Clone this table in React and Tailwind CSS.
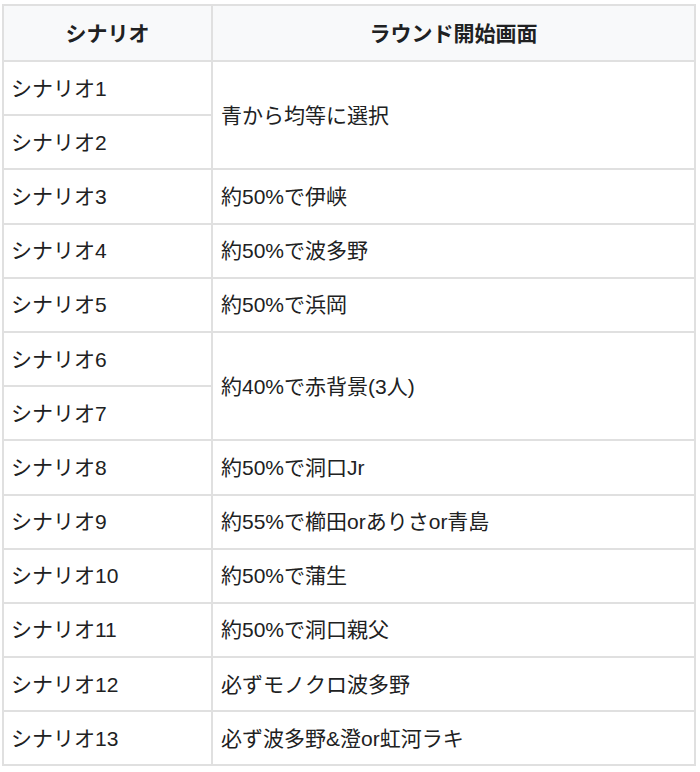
import React from "react";

const rows = [
  ["シナリオ1", "青から均等に選択", 2],
  ["シナリオ2", null],
  ["シナリオ3", "約50%で伊峡", 1],
  ["シナリオ4", "約50%で波多野", 1],
  ["シナリオ5", "約50%で浜岡", 1],
  ["シナリオ6", "約40%で赤背景(3人)", 2],
  ["シナリオ7", null],
  ["シナリオ8", "約50%で洞口Jr", 1],
  ["シナリオ9", "約55%で櫛田orありさor青島", 1],
  ["シナリオ10", "約50%で蒲生", 1],
  ["シナリオ11", "約50%で洞口親父", 1],
  ["シナリオ12", "必ずモノクロ波多野", 1],
  ["シナリオ13", "必ず波多野&澄or虹河ラキ", 1],
];

export default function App() {
  return (
    <div
      className="bg-white w-[700px] h-[772px] pt-[4px] pl-[2px] text-[#202122]"
      style={{ fontFamily: '"Liberation Sans", "Noto Sans CJK JP", sans-serif' }}
    >
      <table className="w-[694px] border-collapse border-2 border-[#e0e0e0] text-[21px] leading-none">
        <thead>
          <tr className="h-[56px] bg-[#f8f9fa]">
            <th className="w-[209px] border-2 border-[#e0e0e0] font-bold text-center align-middle">
              シナリオ
            </th>
            <th className="border-2 border-[#e0e0e0] font-bold text-center align-middle">
              ラウンド開始画面
            </th>
          </tr>
        </thead>
        <tbody>
          {rows.map(([a, b, span]) => (
            <tr key={a} className="h-[54.2px]">
              <td className="border-2 border-[#e0e0e0] pl-[7px] pr-[8px] align-middle">{a}</td>
              {b !== null && (
                <td
                  rowSpan={span}
                  className="border-2 border-[#e0e0e0] pl-[8px] pr-[8px] align-middle"
                >
                  {b}
                </td>
              )}
            </tr>
          ))}
        </tbody>
      </table>
    </div>
  );
}
